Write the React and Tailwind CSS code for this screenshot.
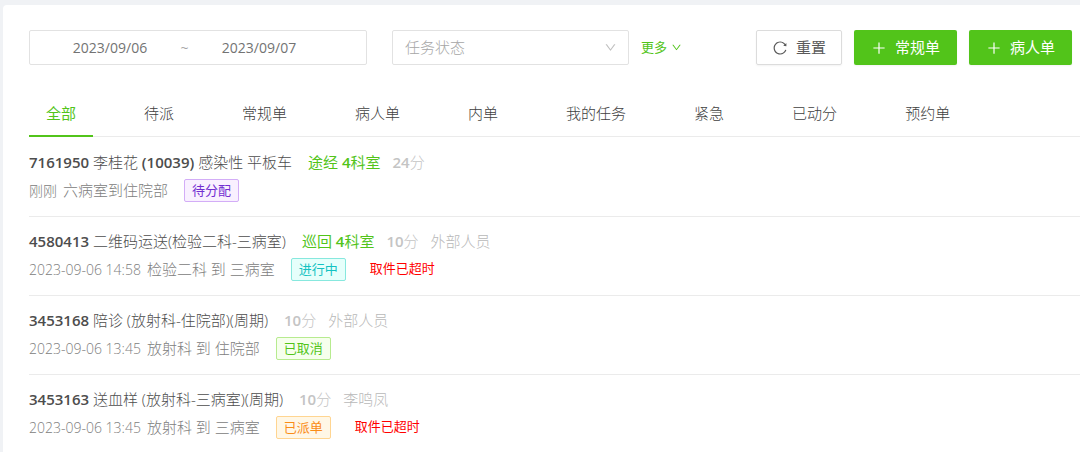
import { useState } from 'react'
import {
  AiOutlineDown,
  AiOutlinePlus,
  AiOutlineReload
} from 'react-icons/ai'
import clsx from 'clsx'

const tabs = ['全部', '待派', '常规单', '病人单', '内单', '我的任务', '紧急', '已动分', '预约单']

const statusStyles = {
  待分配: 'border-[#d3adf7] bg-[#f9f0ff] text-[#722ed1]',
  进行中: 'border-[#87e8de] bg-[#e6fffb] text-[#13c2c2]',
  已取消: 'border-[#b7eb8f] bg-[#f6ffed] text-[#52c41a]',
  已派单: 'border-[#ffd591] bg-[#fff7e6] text-[#fa8c16]'
}

const orders = [
  {
    id: '7161950',
    title: '李桂花 (10039) 感染性 平板车',
    route: '途经 4科室',
    minutes: 24,
    time: '刚刚',
    path: '六病室到住院部',
    status: '待分配'
  },
  {
    id: '4580413',
    title: '二维码运送(检验二科-三病室)',
    route: '巡回 4科室',
    minutes: 10,
    worker: '外部人员',
    time: '2023-09-06 14:58',
    path: '检验二科 到 三病室',
    status: '进行中',
    warning: '取件已超时'
  },
  {
    id: '3453168',
    title: '陪诊 (放射科-住院部)(周期)',
    minutes: 10,
    worker: '外部人员',
    time: '2023-09-06 13:45',
    path: '放射科 到 住院部',
    status: '已取消'
  },
  {
    id: '3453163',
    title: '送血样 (放射科-三病室)(周期)',
    minutes: 10,
    worker: '李鸣凤',
    time: '2023-09-06 13:45',
    path: '放射科 到 三病室',
    status: '已派单',
    warning: '取件已超时'
  }
]

// Цифры и скобки выделяются полужирным, остальной текст обычный
const BoldDigits = ({ text }) =>
  text.split(/(\(?\d+\)?)/).map((part, i) =>
    /\d/.test(part) ? (
      <span key={i} className="font-semibold">{part}</span>
    ) : (
      part
    )
  )

const OrderRow = ({ order }) => (
  <li className="border-b border-[#ebebeb] py-[11px] font-light">
    <div className="flex h-[26px] items-center gap-3">
      <p className="mr-1 text-[#4d4d4d]">
        <BoldDigits text={`${order.id} ${order.title}`} />
      </p>
      {order.route && (
        <span className="font-normal text-[#52c41a]">
          <BoldDigits text={order.route} />
        </span>
      )}
      <span className="text-[#c4c4c4]">
        <BoldDigits text={`${order.minutes}分`} />
      </span>
      {order.worker && <span className="text-[#b8b8b8]">{order.worker}</span>}
    </div>
    <div className="flex h-[30px] items-center gap-4 text-[#808080]">
      <p className="flex items-center gap-[6px]">
        <time className="text-[14px]">{order.time}</time>
        <span>{order.path}</span>
      </p>
      <span
        className={clsx(
          'rounded-xs border px-[7px] text-[13px] leading-[21px] font-normal',
          statusStyles[order.status]
        )}
      >
        {order.status}
      </span>
      {order.warning && (
        <span className="ml-2 text-[13px] font-normal text-[#f00]">{order.warning}</span>
      )}
    </div>
  </li>
)

const App = () => {
  const [activeTab, setActiveTab] = useState('全部')
  const [startDate, setStartDate] = useState('2023/09/06')
  const [endDate, setEndDate] = useState('2023/09/07')

  return (
    <div className="min-h-screen bg-[#f0f2f5] pt-[5px] pl-[3px] font-['Open_Sans','Noto_Sans_CJK_SC',sans-serif] text-[15px] whitespace-nowrap">
      <main className="min-h-[calc(100vh-5px)] rounded-tl-sm bg-white pt-[25px] pl-[26px]">
        {/* Фильтры и кнопки */}
        <div className="flex items-center pr-2">
          <div className="flex h-[35px] w-[338px] items-center rounded-xs border border-[#e2e2e2] pr-[38px] pl-[11px] text-[14px] text-[#737373]">
            <input
              aria-label="开始日期"
              className="w-0 flex-1 text-center outline-none"
              value={startDate}
              onChange={(e) => setStartDate(e.target.value)}
            />
            <span className="w-[11px] text-center text-[#a6a6a6]">~</span>
            <input
              aria-label="结束日期"
              className="w-0 flex-1 text-center outline-none"
              value={endDate}
              onChange={(e) => setEndDate(e.target.value)}
            />
          </div>

          <div className="relative ml-[25px] w-[237px]">
            <select
              aria-label="任务状态"
              defaultValue=""
              className="h-[35px] w-full appearance-none rounded-xs border border-[#e2e2e2] bg-white px-3 font-light text-[#a6a6a6] outline-none"
            >
              <option value="">任务状态</option>
              {Object.keys(statusStyles).map((status) => (
                <option key={status}>{status}</option>
              ))}
            </select>
            <AiOutlineDown className="pointer-events-none absolute top-[11px] right-3 h-[13px] w-[13px] text-[#bfbfbf]" />
          </div>

          <a href="#more" className="ml-3 flex items-center gap-1 text-[13px] text-[#52c41a]">
            更多
            <AiOutlineDown className="h-[11px] w-[11px]" />
          </a>

          <div className="ml-auto flex gap-3">
            <button className="flex h-[35px] items-center gap-2 rounded-xs border border-[#dcdcdc] px-[15px] text-[#595959] shadow-xs">
              <AiOutlineReload className="h-4 w-4" />
              重置
            </button>
            <button className="flex h-[35px] items-center gap-2 rounded-xs bg-[#52c41a] px-[17px] text-white shadow-xs">
              <AiOutlinePlus className="h-4 w-4" />
              常规单
            </button>
            <button className="flex h-[35px] items-center gap-2 rounded-xs bg-[#52c41a] px-[17px] text-white shadow-xs">
              <AiOutlinePlus className="h-4 w-4" />
              病人单
            </button>
          </div>
        </div>

        {/* Вкладки */}
        <nav className="mt-6 flex gap-[34px] border-b border-[#ebebeb]">
          {tabs.map((tab) => (
            <button
              key={tab}
              onClick={() => setActiveTab(tab)}
              className={clsx(
                '-mb-px h-12 border-b-2 px-[17px] pt-[3px]',
                tab === activeTab
                  ? 'border-[#52c41a] text-[#52c41a]'
                  : 'border-transparent font-light text-[#404040]'
              )}
            >
              {tab}
            </button>
          ))}
        </nav>

        {/* Список заявок */}
        <ul className="pt-px">
          {orders.map((order) => (
            <OrderRow key={order.id} order={order} />
          ))}
        </ul>
      </main>
    </div>
  )
}

export default App
